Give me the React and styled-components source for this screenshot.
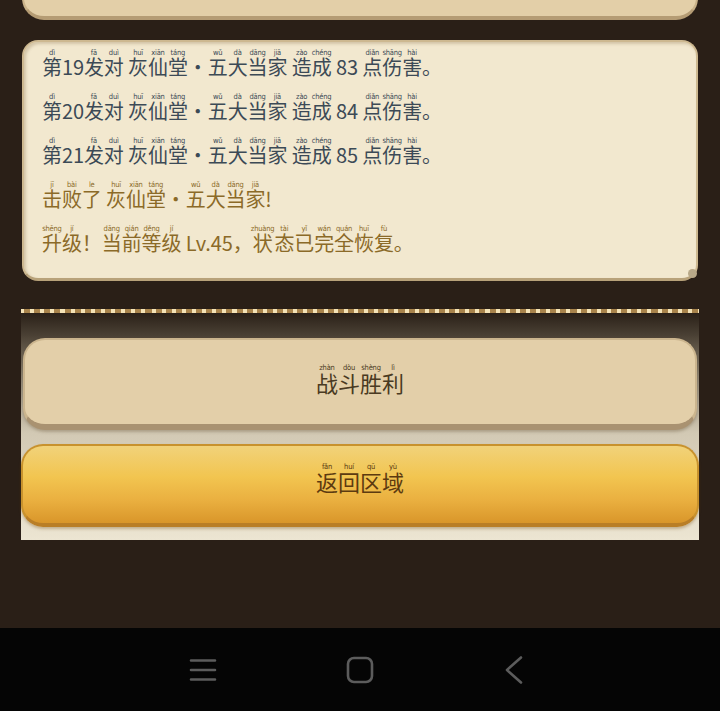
import styled, { createGlobalStyle } from "styled-components";

const Global = createGlobalStyle`
html,body{margin:0;padding:0;background:#2a1f17;}
body{font-family:"Noto Sans CJK SC","Noto Sans",sans-serif;}
rt{font-family:"Liberation Sans Narrow","DejaVu Sans Condensed","Liberation Sans",sans-serif;font-size:7.5px;letter-spacing:-0.2px;line-height:1;}
`;

const Screen = styled.div`
display:flex;
flex-direction:column;
height:711px;
overflow:hidden;
background:#2a1f17;
`;
const Main = styled.div`
flex:1;
display:flex;
flex-direction:column;
padding:0 21px;
`;
const TopCard = styled.div`
margin:-40px 1px 0;
height:60px;
box-sizing:border-box;
background:#e3cfa8;
border:2px solid #c9b289;
border-top:none;
border-bottom:4px solid #b59c74;
border-radius:0 0 22px 22px;
`;
const LogPanel = styled.div`
position:relative;
margin:20px 1px 0;
height:241px;
box-sizing:border-box;
padding:3px 18px 0;
background:#f2e8cf;
border:2px solid #cdb890;
border-bottom:3px solid #b8a27a;
border-radius:16px;
box-shadow:inset 2px 2px 3px rgba(120,90,50,0.25);
`;
const Thumb = styled.div`
position:absolute;
right:-1px;
bottom:0;
width:9px;
height:9px;
border-radius:50%;
background:#b8a888;
`;
const LogLine = styled.div`
font-size:20px;
line-height:44px;
height:44px;
white-space:nowrap;
letter-spacing:-0.1px;
color:${(p) => (p.gold ? "#8b6a28" : "#3c4a56")};
`;
const Section = styled.div`
margin-top:28px;
display:flex;
flex-direction:column;
gap:14px;
padding:25px 0 13px;
border-top:4px solid transparent;
border-image:repeating-linear-gradient(to right,#a8844c 0 3px,#f4e4b8 3px 7px,#a8844c 7px 10px) 4;
background:linear-gradient(to bottom,#2a2118 0,#4a4034 22px,#8c8270 62px,#d2c9b4 120px,#ece5d2 100%);
`;
const BigButton = styled.div`
display:flex;
align-items:center;
justify-content:center;
box-sizing:border-box;
height:${(p) => p.h}px;
margin:0 ${(p) => (p.gold ? 0 : 2)}px;
padding-bottom:${(p) => (p.gold ? 10 : 4)}px;
border-radius:22px;
font-size:22px;
line-height:30px;
${(p) =>
  p.gold
    ? `background:linear-gradient(to bottom,#f1d27a 0%,#f2c550 40%,#eab040 70%,#d9962a 100%);
border:2px solid #c8922e;
border-bottom:4px solid #b97e26;
color:#5c3a10;
box-shadow:0 2px 3px rgba(120,80,20,0.35);`
    : `background:#e3cfa9;
border:2px solid #cbb58e;
border-bottom:6px solid #a99271;
color:#4a3a22;
box-shadow:0 2px 3px rgba(90,70,40,0.3);`}
`;
const NavBar = styled.div`
height:83px;
background:#050505;
display:flex;
align-items:center;
justify-content:center;
gap:129px;
`;
const NavIcon = styled.svg`
width:28px;
height:28px;
stroke:#5c5c5c;
stroke-width:2.6;
fill:none;
stroke-linecap:round;
stroke-linejoin:round;
`;

const Ruby = ({ text, py }) => {
  const list = py.split(" ");
  let i = 0;
  return Array.from(text).map((ch, k) =>
    /\p{Script=Han}/u.test(ch) ? (
      <ruby key={k}>
        {ch}
        <rt>{list[i++]}</rt>
      </ruby>
    ) : (
      <span key={k}>{ch}</span>
    )
  );
};

const hitPy = "dì fā duì huī xiān táng wǔ dà dāng jiā zào chéng diǎn shāng hài";
const lines = [
  { text: "第19发对 灰仙堂・五大当家 造成 83 点伤害。", py: hitPy },
  { text: "第20发对 灰仙堂・五大当家 造成 84 点伤害。", py: hitPy },
  { text: "第21发对 灰仙堂・五大当家 造成 85 点伤害。", py: hitPy },
  { text: "击败了 灰仙堂・五大当家!", py: "jī bài le huī xiān táng wǔ dà dāng jiā", gold: true },
  {
    text: "升级！当前等级 Lv.45，状态已完全恢复。",
    py: "shēng jí dāng qián děng jí zhuàng tài yǐ wán quán huī fù",
    gold: true,
  },
];

export default function App() {
  return (
    <Screen>
      <Global />
      <Main>
        <TopCard />
        <LogPanel>
          {lines.map((l, i) => (
            <LogLine key={i} gold={l.gold}>
              <Ruby text={l.text} py={l.py} />
            </LogLine>
          ))}
          <Thumb />
        </LogPanel>
        <Section>
          <BigButton h={92}>
            <Ruby text="战斗胜利" py="zhàn dòu shèng lì" />
          </BigButton>
          <BigButton h={83} gold>
            <Ruby text="返回区域" py="fǎn huí qū yù" />
          </BigButton>
        </Section>
      </Main>
      <NavBar>
        <NavIcon viewBox="0 0 28 28">
          <path d="M2 4.5h24M2 14h24M2 23.5h24" />
        </NavIcon>
        <NavIcon viewBox="0 0 28 28">
          <rect x="2" y="2" width="24" height="24" rx="6" />
        </NavIcon>
        <NavIcon viewBox="0 0 28 28">
          <path d="M18 1.5 4 14l14 12.5" />
        </NavIcon>
      </NavBar>
    </Screen>
  );
}
